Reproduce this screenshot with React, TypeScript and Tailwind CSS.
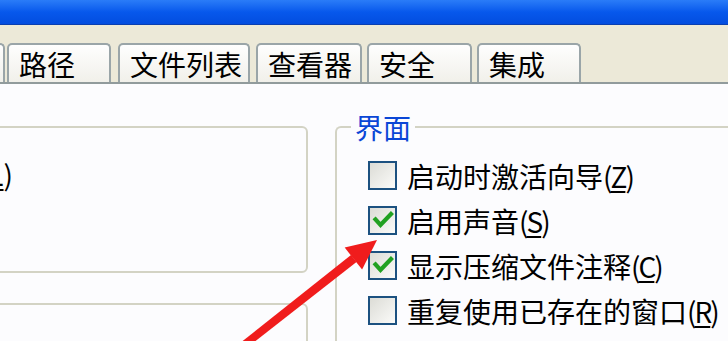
import React from "react";

const FONT = '"Noto Sans CJK SC", "Liberation Sans", sans-serif';

function Tab({ label, w, ml }: { label: string; w: number; ml: number }) {
  return (
    <div
      className="h-[39px] border-2 border-b-0 border-[#9aa5a8] rounded-t-[5px] bg-gradient-to-b from-[#fefefe] to-[#f1f0ea] pl-[10px] pt-[5px] text-[28px] leading-[28px] text-black whitespace-nowrap"
      style={{ width: w, marginLeft: ml }}
    >
      {label}
    </div>
  );
}

function Check() {
  return (
    <svg width="25" height="25" viewBox="0 0 25 25" className="block">
      <path
        d="M5.5 11.5 L10.5 17 L21 6"
        fill="none"
        stroke="#21a121"
        strokeWidth="4.2"
        strokeLinecap="square"
        strokeLinejoin="miter"
      />
    </svg>
  );
}

function Row({ label, hot, checked }: { label: string; hot: string; checked: boolean }) {
  return (
    <div className="h-[45px] flex items-center">
      <div className="w-[29px] h-[29px] border-2 border-[#1c5180] bg-gradient-to-br from-[#dcdcd6] to-[#fbfbf9] flex items-center justify-center shrink-0">
        {checked && <Check />}
      </div>
      <div className="ml-[10px] text-[28px] leading-[28px] text-black whitespace-nowrap">
        {label}
        <span className="tracking-[-2px]">
          (<span className="underline underline-offset-[3px]">{hot}</span>)
        </span>
      </div>
    </div>
  );
}

export default function App() {
  return (
    <div
      className="w-[728px] h-[341px] overflow-hidden relative bg-[#fcfcfe]"
      style={{ fontFamily: FONT }}
    >
      {/* title bar */}
      <div className="h-[25px] bg-gradient-to-b from-[#2a7cf8] via-[#0758ec] to-[#034ddf] border-b border-[#0a3fb0]" />

      {/* tab strip */}
      <div className="h-[59px] bg-[#ece9d8] flex items-end border-b-2 border-[#919b9c]">
        <Tab label="" w={60} ml={-55} />
        <Tab label="路径" w={104} ml={2} />
        <Tab label="文件列表" w={132} ml={7} />
        <Tab label="查看器" w={106} ml={6} />
        <Tab label="安全" w={105} ml={5} />
        <Tab label="集成" w={104} ml={5} />
      </div>

      {/* content */}
      <div className="flex items-start">
        <div className="-ml-[20px] w-[328px] mt-[42px] flex flex-col gap-[30px] shrink-0">
          <div className="h-[147px] border-2 border-[#d3d3c4] rounded-[6px] pt-[24px]">
            <div className="w-[31px] flex justify-end whitespace-nowrap text-[28px] leading-[45px] text-black">
              <span>
                显示(<span className="underline underline-offset-[3px]">L</span>)
              </span>
            </div>
          </div>
          <div className="h-[80px] border-2 border-[#d3d3c4] rounded-[6px]" />
        </div>

        <fieldset className="ml-[27px] mt-[29px] flex-1 h-[300px] border-2 border-r-0 border-[#d3d3c4] rounded-tl-[6px] pl-[31px] pt-[12px] m-0">
          <legend className="-ml-[17px] px-[4px] text-[28px] leading-[28px] text-[#0a46d6]">界面</legend>
          <Row label="启动时激活向导" hot="Z" checked={false} />
          <Row label="启用声音" hot="S" checked={true} />
          <Row label="显示压缩文件注释" hot="C" checked={true} />
          <Row label="重复使用已存在的窗口" hot="R" checked={false} />
        </fieldset>
      </div>

      {/* red arrow annotation */}
      <svg
        className="absolute left-0 top-0 pointer-events-none"
        width="728"
        height="341"
        viewBox="0 0 728 341"
      >
        <polygon
          points="241.5,341.9 246.5,348.1 356.5,262 351,255"
          fill="#f01c1c"
        />
        <polygon points="377,240 344.7,247.6 362.1,269.6" fill="#f01c1c" />
      </svg>
    </div>
  );
}
